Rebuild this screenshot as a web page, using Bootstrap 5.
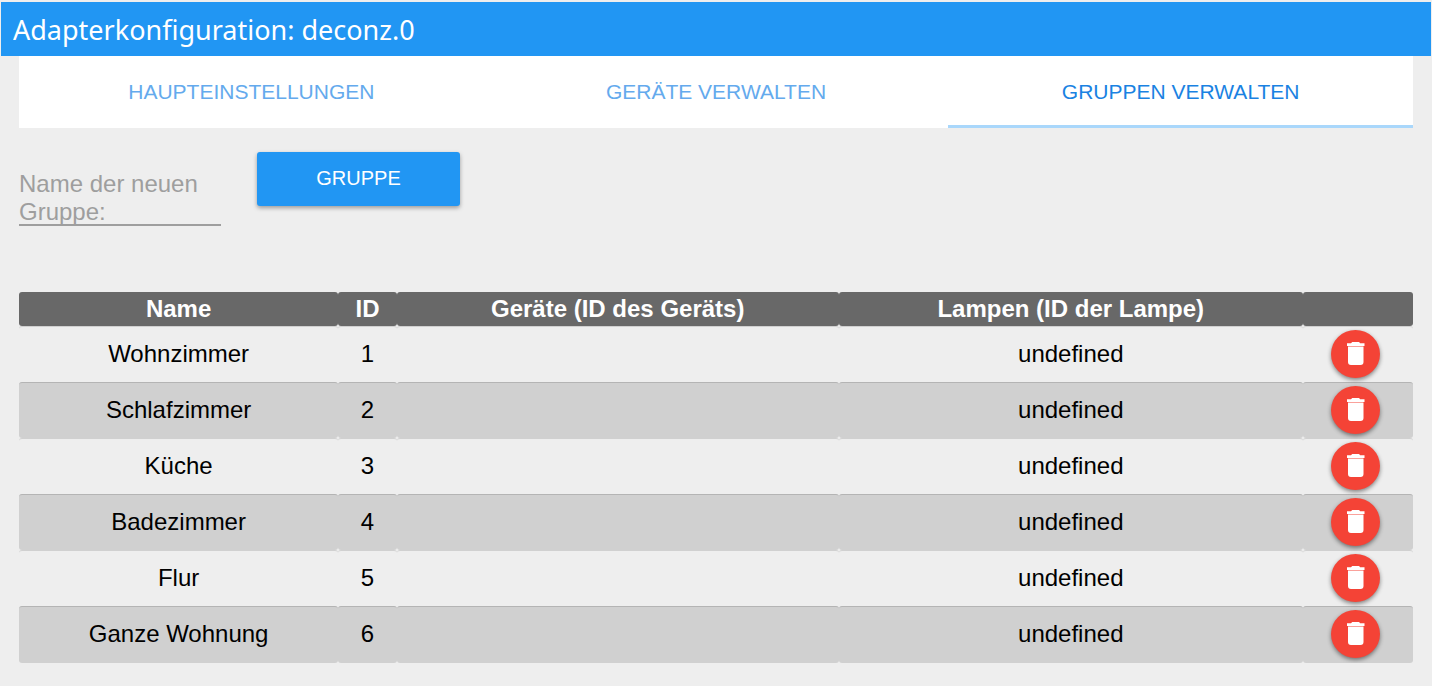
<!DOCTYPE html>
<html lang="de">
<head>
<meta charset="utf-8">
<meta name="viewport" content="width=device-width, initial-scale=1">
<title>Adapterkonfiguration: deconz.0</title>
<link href="https://cdn.jsdelivr.net/npm/bootstrap@5.3.0/dist/css/bootstrap.min.css" rel="stylesheet">
<style>
  body { background: #eee; color: #000; font: 24px/28px "Liberation Sans", Arial, sans-serif; }
  .titlebar { background: #2196f3; color: #fff; height: 54px; margin: 2px 1px 0; padding: 0 12px; }
  .titlebar h1 { font: 27px/56px "Noto Sans", "Segoe UI", sans-serif; }
  .page-main { padding: 0 19px; }
  .tabs-bar { background: #fff; --bs-nav-link-font-size: 21px; }
  .tabs-bar .nav-link { height: 72px; padding: 0; line-height: 72px; border-radius: 0; color: #64aaed; border-bottom: 3px solid transparent; }
  .tabs-bar .nav-link.active { color: #1a82e2; border-bottom-color: #a9d7fb; }
  .toolbar { padding-top: 24px; gap: 36px; margin-bottom: 66px; }
  .name-field { width: 202px; height: 74px; }
  .name-field > * { grid-area: 1 / 1; }
  .name-field label { color: #9e9e9e; align-self: end; pointer-events: none; z-index: 1; line-height: 28px; }
  .name-field input { background: transparent; border: 0; border-bottom: 2px solid #9e9e9e; border-radius: 0; width: 100%; outline: 0; }
  .btn-add { width: 203px; height: 54px; padding: 0 0 2px; border: 0; border-radius: 3px; font-size: 20px; background: #2196f3; color: #fff; box-shadow: 0 2px 4px rgba(0,0,0,.35); }
  .btn-add:hover { background: #42a5f5; color: #fff; }
  .group-table { width: 100%; table-layout: fixed; border-collapse: separate; border-spacing: 0; text-align: center; }
  .group-table th { background: #686868; color: #fff; height: 34px; padding: 0; border-radius: 3px; text-align: center; }
  .group-table td { height: 56px; padding: 0 0 1px; border-radius: 3px; border-top: 1px solid #d0d0d0; }
  .group-table td:last-child { padding-right: 5px; }
  .group-table tbody tr:nth-child(even) td { background: #d0d0d0; border-top-color: #b4b4b4; }
  .group-table tbody tr:last-child td { height: 57px; padding-bottom: 2px; }
  .c-name { width: 22.9%; } .c-id { width: 4.2%; } .c-dev { width: 31.7%; } .c-del { width: 7.9%; }
  .btn-del { width: 49px; height: 48px; padding: 0; border: 0; border-radius: 50%; background: #f44336; color: #fff; box-shadow: 0 2px 4px rgba(0,0,0,.45); }
  .btn-del:hover { background: #ef5350; color: #fff; }
</style>
</head>
<body>
<header class="titlebar"><h1 class="m-0 text-truncate">Adapterkonfiguration: deconz.0</h1></header>
<main class="page-main">
  <nav class="nav nav-fill nav-justified tabs-bar">
    <a class="nav-link" href="#main">HAUPTEINSTELLUNGEN</a>
    <a class="nav-link" href="#devices">GERÄTE VERWALTEN</a>
    <a class="nav-link active" aria-current="page" href="#groups">GRUPPEN VERWALTEN</a>
  </nav>
  <form class="toolbar d-flex align-items-start">
    <div class="name-field d-grid">
      <label for="groupName">Name der neuen Gruppe:</label>
      <input id="groupName" type="text">
    </div>
    <button type="button" class="btn btn-add">GRUPPE</button>
  </form>
  <table class="group-table">
    <colgroup><col class="c-name"><col class="c-id"><col class="c-dev"><col><col class="c-del"></colgroup>
    <thead>
      <tr><th>Name</th><th>ID</th><th>Geräte (ID des Geräts)</th><th>Lampen (ID der Lampe)</th><th></th></tr>
    </thead>
    <tbody id="groupRows"></tbody>
  </table>
</main>
<script src="https://cdn.jsdelivr.net/npm/bootstrap@5.3.0/dist/js/bootstrap.bundle.min.js"></script>
<script>
  const groups = ["Wohnzimmer", "Schlafzimmer", "Küche", "Badezimmer", "Flur", "Ganze Wohnung"];
  document.getElementById("groupRows").innerHTML = groups.map((name, i) => `
    <tr><td>${name}</td><td>${i + 1}</td><td></td><td>undefined</td>
      <td><button type="button" class="btn btn-del d-inline-flex align-items-center justify-content-center" aria-label="${name} löschen">
        <svg width="19" height="24" viewBox="0 0 19 24" fill="currentColor" aria-hidden="true"><path d="M1 1.200H5L6.200 0H13L14.200 1.200H18.500V4H1ZM2 4.600H17.500V20Q17.500 23 14.500 23H5Q2 23 2 20Z"/></svg>
      </button></td></tr>`).join("");
</script>
</body>
</html>
